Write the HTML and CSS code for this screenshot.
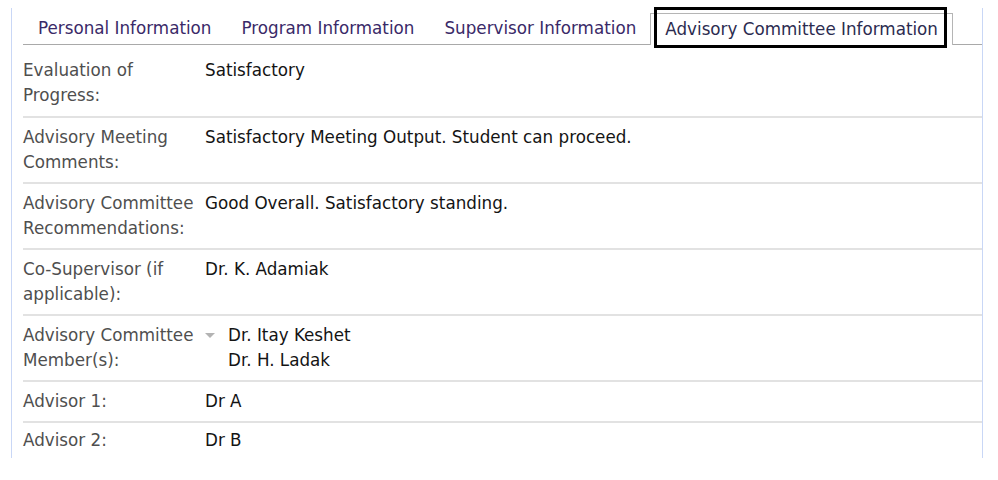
FILE: index.html
```html
<!DOCTYPE html>
<html>
<head>
<meta charset="utf-8">
<link rel="stylesheet" href="styles.css">
</head>
<body>
<div class="panel">
  <div class="tabs">
    <div class="tab">Personal Information</div>
    <div class="tab">Program Information</div>
    <div class="tab">Supervisor Information</div>
    <div class="tab active">Advisory Committee Information<span class="highlight"></span></div>
  </div>
  <div class="rows">
    <div class="row first">
      <div class="label">Evaluation of Progress:</div>
      <div class="value">Satisfactory</div>
    </div>
    <div class="row">
      <div class="label">Advisory Meeting Comments:</div>
      <div class="value">Satisfactory Meeting Output. Student can proceed.</div>
    </div>
    <div class="row">
      <div class="label">Advisory Committee Recommendations:</div>
      <div class="value">Good Overall. Satisfactory standing.</div>
    </div>
    <div class="row">
      <div class="label">Co-Supervisor (if applicable):</div>
      <div class="value">Dr. K. Adamiak</div>
    </div>
    <div class="row">
      <div class="label">Advisory Committee Member(s):</div>
      <div class="value members">
        <span class="caret"></span>
        <div class="list">
          <div>Dr. Itay Keshet</div>
          <div>Dr. H. Ladak</div>
        </div>
      </div>
    </div>
    <div class="row">
      <div class="label">Advisor 1:</div>
      <div class="value">Dr A</div>
    </div>
    <div class="row last">
      <div class="label">Advisor 2:</div>
      <div class="value">Dr B</div>
    </div>
  </div>
</div>
</body>
</html>
```

FILE: styles.css
```css
html, body {
  margin: 0;
  padding: 0;
  background: #ffffff;
}

body {
  font-family: "DejaVu Sans", "Liberation Sans", sans-serif;
  font-size: 16.75px;
  color: #1e1e1e;
}

.panel {
  margin: 8px 0 0 11px;
  width: 972px;
  height: 450px;
  border-left: 1px solid #c9d7f6;
  border-right: 1px solid #c9d7f6;
  padding-left: 11px;
  box-sizing: border-box;
}

.tabs {
  display: flex;
  align-items: flex-end;
  height: 37px;
  border-bottom: 1px solid #a9a9a9;
  box-sizing: border-box;
}

.tab {
  padding: 0 15px;
  height: 31px;
  line-height: 30px;
  color: #3a2a68;
  white-space: nowrap;
  box-sizing: border-box;
}

.tab.active {
  position: relative;
  margin-left: -1px;
  padding: 0 14px;
  height: 32px;
  margin-bottom: -1px;
  border: 1px solid #b5b5b5;
  border-bottom: none;
  background: #ffffff;
  color: #2c2c50;
}

.highlight {
  position: absolute;
  left: 3px;
  right: 5px;
  top: -7px;
  height: 41px;
  border: 3px solid #000000;
  box-sizing: border-box;
}

.row {
  display: grid;
  grid-template-columns: 182px 1fr;
  padding: 7px 0;
  line-height: 25px;
  border-bottom: 2px solid #e2e2e2;
}

.row.first {
  padding-top: 13px;
  padding-bottom: 8px;
}

.row.last {
  border-bottom: none;
  padding-top: 5px;
}

.label {
  color: #4f4f4f;
  padding-right: 4px;
}

.value {
  color: #141414;
}

.members {
  display: flex;
  align-items: flex-start;
}

.caret {
  width: 0;
  height: 0;
  margin: 10px 13px 0 0;
  border-left: 5px solid transparent;
  border-right: 5px solid transparent;
  border-top: 5px solid #b3b3b3;
}
```
